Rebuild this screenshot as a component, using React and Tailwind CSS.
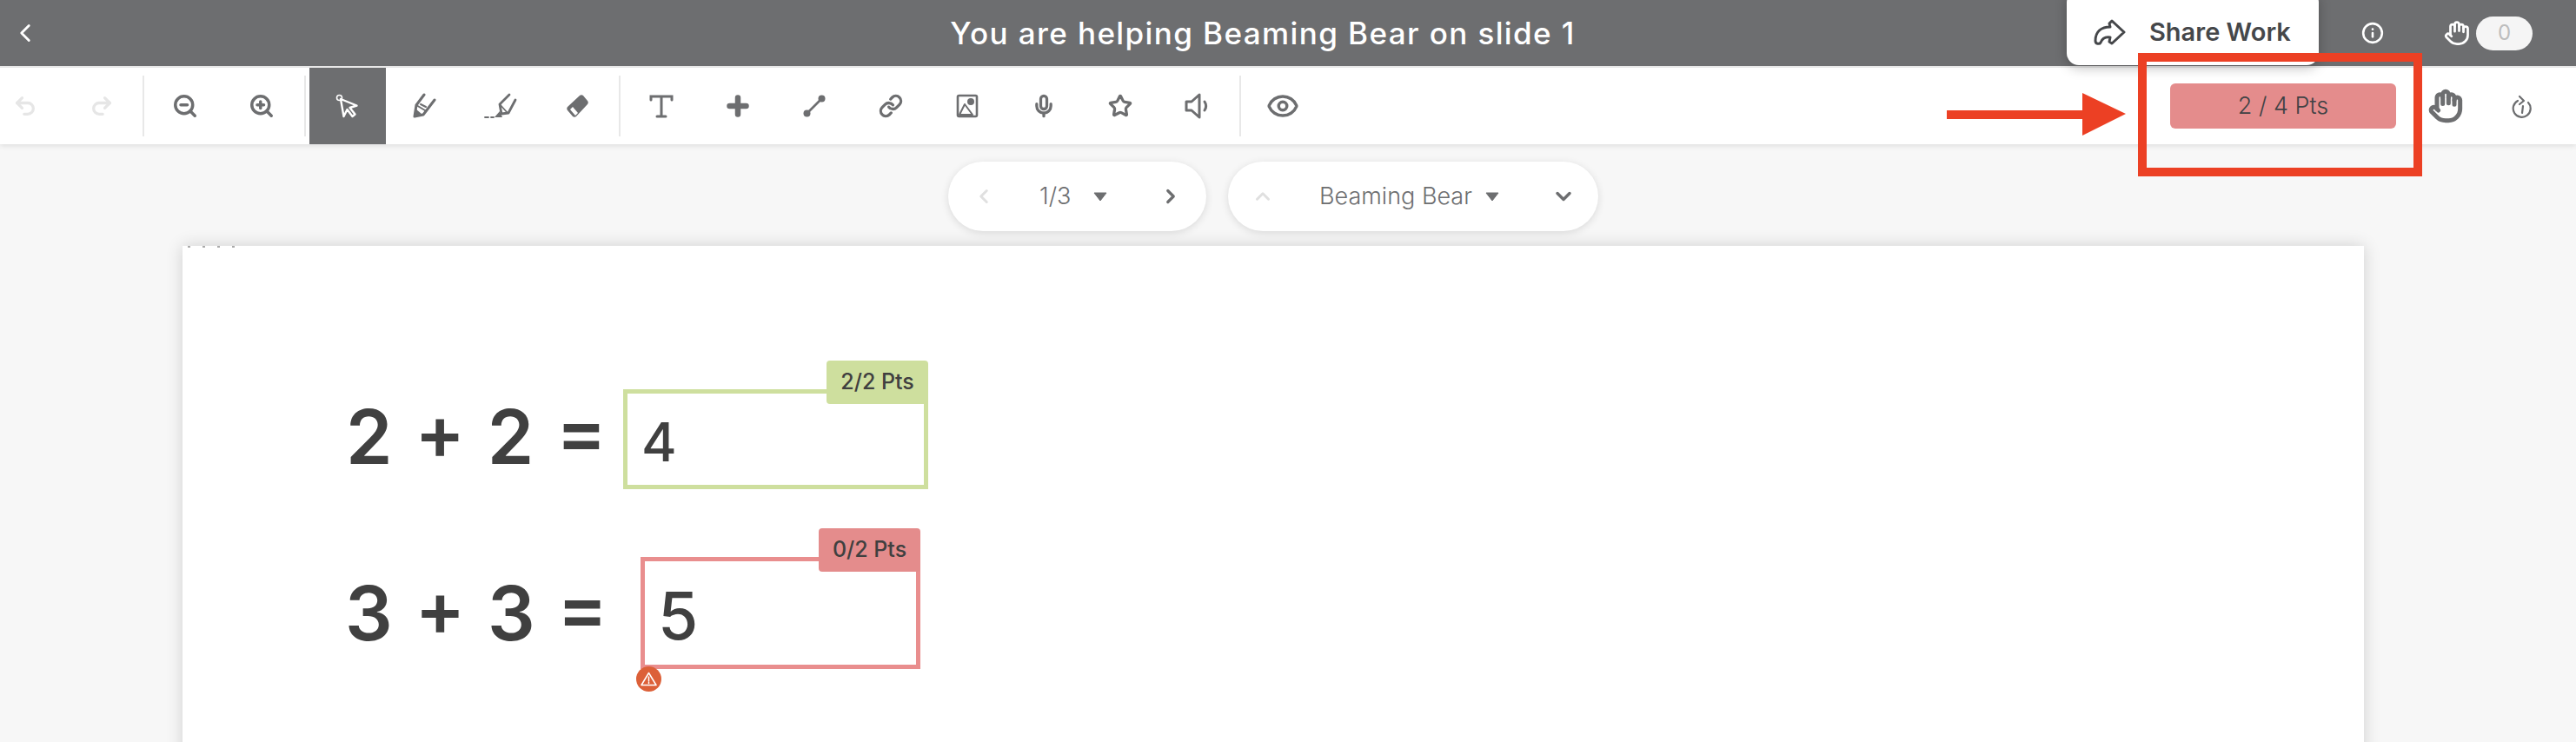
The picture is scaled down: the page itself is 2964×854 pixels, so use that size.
import { ChevronLeft, ChevronRight, ChevronUp, ChevronDown, Undo2, Redo2, ZoomIn, ZoomOut, Link, Mic, Star, Eye, Hand, Info } from 'lucide-react';

// Toolbar icons that the packages don't have
const GRAY = '#6d6e70';

function CursorIcon() {
  return (
    <svg width="28" height="28" viewBox="0 0 28 28" fill="none" stroke="#fff" strokeWidth="2.4">
      <circle cx="4.500" cy="4.500" r="3" strokeWidth="1.6" />
      <path d="M6 6l3.500 20 4-8 6 8 3-2.500-6-7.500 8-2.500z" strokeLinejoin="round" />
    </svg>
  );
}

function PenIcon() {
  return (
    <svg width="30" height="30" viewBox="0 0 30 30" fill="none" stroke={GRAY} strokeWidth="3" strokeLinecap="round" strokeLinejoin="round">
      <path d="M15 2L6 14 4 27l10-2 13-17" />
      <path d="M6 14l10 6M11 13l6 3" strokeWidth="2" />
      <path d="M4 27l1-9 7 6z" fill={GRAY} stroke="none" />
    </svg>
  );
}

function HighlighterIcon() {
  return (
    <svg width="38" height="30" viewBox="0 0 38 30" fill="none" stroke={GRAY} strokeWidth="2.800" strokeLinecap="round" strokeLinejoin="round">
      <path d="M29 2L18 13l2 11 8-1 8-15" />
      <path d="M18 13l9 10" strokeWidth="1.800" />
      <path d="M12 28l6-7 3 7z" fill={GRAY} stroke="none" />
      <path d="M1 28h4M8 28h3" strokeWidth="1.800" />
    </svg>
  );
}

function EraserIcon() {
  return (
    <svg width="30" height="30" viewBox="0 0 30 30">
      <path d="M18 3c1-1 3-1 4 0l5 6c1 1 1 3 0 4L14 27c-1 1-3 1-4 0l-6-7c-1-1-1-3 0-4z" fill={GRAY} />
      <path d="M10 16l6 7-3 3-6-7z" fill="#fff" />
    </svg>
  );
}

function TextIcon() {
  return (
    <svg width="28" height="28" viewBox="0 0 28 28" fill="none" stroke={GRAY} strokeWidth="3" strokeLinecap="round">
      <path d="M2 7V3h24v4M14 3v23M9 26h10" />
    </svg>
  );
}

function PlusIcon() {
  return (
    <svg width="26" height="26" viewBox="0 0 26 26" fill="none" stroke={GRAY} strokeWidth="6.500" strokeLinecap="round">
      <path d="M13 3.500v19M3.500 13h19" />
    </svg>
  );
}

function LineIcon() {
  return (
    <svg width="28" height="28" viewBox="0 0 28 28" fill={GRAY} stroke={GRAY} strokeWidth="2.600">
      <path d="M6 22L22 6" />
      <circle cx="5.500" cy="22.500" r="4" stroke="none" />
      <circle cx="22.500" cy="5.500" r="4" stroke="none" />
    </svg>
  );
}

function ImageIcon() {
  return (
    <svg width="26" height="28" viewBox="0 0 26 28" fill="none" stroke={GRAY} strokeWidth="2.600">
      <rect x="2" y="2" width="22" height="24" rx="1.500" />
      <circle cx="17" cy="9" r="4" fill={GRAY} stroke="none" />
      <path d="M4 24l6-12 9 12z" strokeWidth="2" strokeLinejoin="round" />
    </svg>
  );
}

function SpeakerIcon() {
  return (
    <svg width="30" height="30" viewBox="0 0 30 30" fill="none" stroke={GRAY} strokeWidth="3" strokeLinejoin="round" strokeLinecap="round">
      <path d="M3 10h6l9-8v26l-9-8H3z" />
      <path d="M24 10c2 3 2 7 0 10" />
    </svg>
  );
}

function RotateIcon() {
  return (
    <svg width="26" height="28" viewBox="0 0 26 28" fill="none" stroke={GRAY} strokeWidth="2.200" strokeLinecap="round" strokeLinejoin="round">
      <path d="M8 8a10 10 0 1 0 12 2" />
      <path d="M10 3l5 5-5 4" />
      <path d="M13 22l1-8" />
    </svg>
  );
}

function ShareIcon() {
  return (
    <svg width="38" height="30" viewBox="0 0 38 30" fill="none" stroke="#45474a" strokeWidth="3" strokeLinejoin="round" strokeLinecap="round">
      <path d="M22 2l14 13-14 13-3-2 1-5c-6-1-9 1-11 6-1 2-6 2-6-2C3 14 10 9 20 9l-1-4z" />
    </svg>
  );
}

function Caret() {
  return (
    <svg width="16" height="11" viewBox="0 0 16 11">
      <path d="M1 1h14L8 10z" fill={GRAY} stroke={GRAY} strokeLinejoin="round" />
    </svg>
  );
}

function WarnIcon() {
  return (
    <svg width="19" height="17" viewBox="0 0 19 17" fill="none" stroke="#fff" strokeWidth="1.500" strokeLinejoin="round">
      <path d="M9.500 1.500L18 15.500H1z" />
      <path d="M9.500 6v5M9.500 12.500v1" strokeLinecap="round" />
    </svg>
  );
}

function ToolBtn({ children, active, className = '' }) {
  return (
    <div className={`w-[88px] h-full flex items-center justify-center shrink-0 ${active ? 'bg-[#6d6e70]' : ''} ${className}`}>
      {children}
    </div>
  );
}

function Sep({ className = '' }) {
  return <div className={`w-[2px] h-[70px] bg-[#e8e8e8] shrink-0 ${className}`} />;
}

function PtsTag({ className, children }) {
  return (
    <div className={`absolute -top-[38px] -right-[5px] w-[117px] h-[50px] rounded-[4px] flex items-center justify-center text-[25px] font-medium text-[#404040] ${className}`}>
      {children}
    </div>
  );
}

export default function App() {
  return (
    <div className="relative w-[2964px] h-[854px] overflow-hidden bg-[#f7f7f7] font-['Inter',sans-serif]">
      {/* Top bar */}
      <header className="relative z-20 h-[76px] bg-[#6d6e70] flex items-center">
        <div className="w-[528px] pl-[12px] shrink-0">
          <ChevronLeft size={34} color="#fff" strokeWidth={2} />
        </div>
        <h1 className="flex-1 text-center text-[35px] font-medium text-white whitespace-nowrap tracking-[1.4px]">
          You are helping Beaming Bear on slide 1
        </h1>
        <div className="w-[290px] self-end -mt-[10px] h-[86px] mb-[1px] bg-white rounded-[14px] flex items-center pl-[30px] pt-[9px] gap-[27px] shadow-[0_3px_14px_rgba(0,0,0,0.25)] shrink-0">
          <ShareIcon />
          <span className="text-[29px] font-semibold text-[#45474a] whitespace-nowrap">Share Work</span>
        </div>
        <div className="w-[124px] flex justify-center shrink-0">
          <Info size={26} color="#fff" strokeWidth={2.4} />
        </div>
        <Hand size={30} color="#fff" strokeWidth={2.2} className="shrink-0 ml-[20px]" />
        <div className="w-[65px] h-[39px] ml-[7px] mr-[50px] rounded-full bg-[#f5f5f5] flex items-center justify-center text-[24px] text-[#bdbdbd] shrink-0">
          0
        </div>
      </header>

      {/* Toolbar */}
      <div className="relative z-10 h-[90px] border-t-2 border-[#e8e8e8] bg-white flex items-center shadow-[0_2px_6px_rgba(0,0,0,0.1)]">
        <ToolBtn className="-ml-[15px]"><Undo2 size={28} color="#e6e6e6" strokeWidth={2.8} /></ToolBtn>
        <ToolBtn><Redo2 size={28} color="#e6e6e6" strokeWidth={2.8} /></ToolBtn>
        <Sep className="ml-[3px] mr-[3px]" />
        <ToolBtn><ZoomOut size={30} color={GRAY} strokeWidth={2.8} /></ToolBtn>
        <ToolBtn><ZoomIn size={30} color={GRAY} strokeWidth={2.8} /></ToolBtn>
        <Sep className="ml-[5px] mr-[4px]" />
        <ToolBtn active><CursorIcon /></ToolBtn>
        <ToolBtn><PenIcon /></ToolBtn>
        <ToolBtn><HighlighterIcon /></ToolBtn>
        <ToolBtn><EraserIcon /></ToolBtn>
        <Sep className="ml-[4px] mr-[3px]" />
        <ToolBtn><TextIcon /></ToolBtn>
        <ToolBtn><PlusIcon /></ToolBtn>
        <ToolBtn><LineIcon /></ToolBtn>
        <ToolBtn><Link size={28} color={GRAY} strokeWidth={2.8} /></ToolBtn>
        <ToolBtn><ImageIcon /></ToolBtn>
        <ToolBtn><Mic size={28} color={GRAY} strokeWidth={2.8} /></ToolBtn>
        <ToolBtn><Star size={28} color={GRAY} strokeWidth={2.8} /></ToolBtn>
        <ToolBtn><SpeakerIcon /></ToolBtn>
        <Sep className="ml-[5px] mr-[4px]" />
        <ToolBtn><Eye size={38} color={GRAY} strokeWidth={2.200} /></ToolBtn>
        <div className="ml-auto w-[260px] h-[52px] rounded-[6px] bg-[#e48c8c] flex items-center justify-center text-[27px] font-light text-[#404245] shrink-0">
          2 / 4 Pts
        </div>
        <ToolBtn className="ml-[13px]"><Hand size={40} color={GRAY} strokeWidth={3} /></ToolBtn>
        <ToolBtn className="mr-[18px]"><RotateIcon /></ToolBtn>
      </div>

      {/* Slide and student pickers */}
      <div className="flex mt-[20px] ml-[1091px] gap-[25px]">
        <div className="w-[297px] h-[80px] rounded-full bg-white flex items-center pl-[28px] shadow-[0_2px_10px_rgba(0,0,0,0.12)]">
          <ChevronLeft size={26} color="#e0e0e0" strokeWidth={2.8} />
          <span className="ml-[51px] w-[44px] text-[27px] font-light text-[#6d6e70]">1/3</span>
          <span className="ml-[18px]"><Caret /></span>
          <ChevronRight size={26} color={GRAY} strokeWidth={3} className="ml-[60px]" />
        </div>
        <div className="w-[426px] h-[80px] rounded-full bg-white flex items-center pl-[27px] shadow-[0_2px_10px_rgba(0,0,0,0.12)]">
          <ChevronUp size={26} color="#e0e0e0" strokeWidth={2.8} />
          <span className="ml-[52px] w-[180px] text-[27px] font-light text-[#6d6e70] whitespace-nowrap">Beaming Bear</span>
          <span className="ml-[11px]"><Caret /></span>
          <ChevronDown size={28} color={GRAY} strokeWidth={3} className="ml-[60px]" />
        </div>
      </div>

      {/* Slide */}
      <div className="relative mt-[17px] ml-[210px] w-[2510px] h-[600px] bg-white shadow-[0_0_18px_rgba(0,0,0,0.16)]">
        <div className="flex gap-[14px] pl-[6px] h-[2px]">
          <span className="w-[3px] h-[2px] bg-[#aaaaaa]" />
          <span className="w-[3px] h-[2px] bg-[#aaaaaa]" />
          <span className="w-[3px] h-[2px] bg-[#aaaaaa]" />
          <span className="w-[3px] h-[2px] bg-[#aaaaaa]" />
        </div>
        <div className="pt-[163px] text-[#404040]">
          <div className="flex items-center h-[115px] pl-[188px]">
            <span className="w-[319px] pb-[6px] text-[86px] font-semibold leading-none whitespace-nowrap [word-spacing:4px]">2 + 2 =</span>
            <div className="relative w-[351px] h-[115px] border-[5px] border-[#cedf9e] flex items-center pl-[16px] pt-[6px] text-[62px] font-medium">
              <PtsTag className="bg-[#cedf9e]">2/2 Pts</PtsTag>
              4
            </div>
          </div>
          <div className="flex items-center h-[129px] pl-[187px] mt-[78px]">
            <span className="w-[340px] text-[86px] font-semibold leading-none whitespace-nowrap [word-spacing:4px]">3 + 3 =</span>
            <div className="relative w-[322px] h-[129px] border-[5px] border-[#e98e8e] flex items-center pl-[15px] pt-[8px] text-[75px] font-medium">
              <PtsTag className="bg-[#e48c8c]">0/2 Pts</PtsTag>
              5
              <div className="absolute -left-[10px] -bottom-[31px] w-[29px] h-[29px] rounded-full bg-[#dc6038] flex items-center justify-center">
                <WarnIcon />
              </div>
            </div>
          </div>
        </div>
      </div>

      {/* Annotation over the screenshot */}
      <div className="absolute z-30 left-[2460px] top-[61px] w-[327px] h-[142px] border-[10px] border-[#ec4024]" />
      <svg className="absolute z-30 left-[2240px] top-[107px]" width="206" height="50" viewBox="0 0 206 50">
        <path d="M0 20h156V0l50 24-50 25V30H0z" fill="#ec4024" />
      </svg>
    </div>
  );
}
